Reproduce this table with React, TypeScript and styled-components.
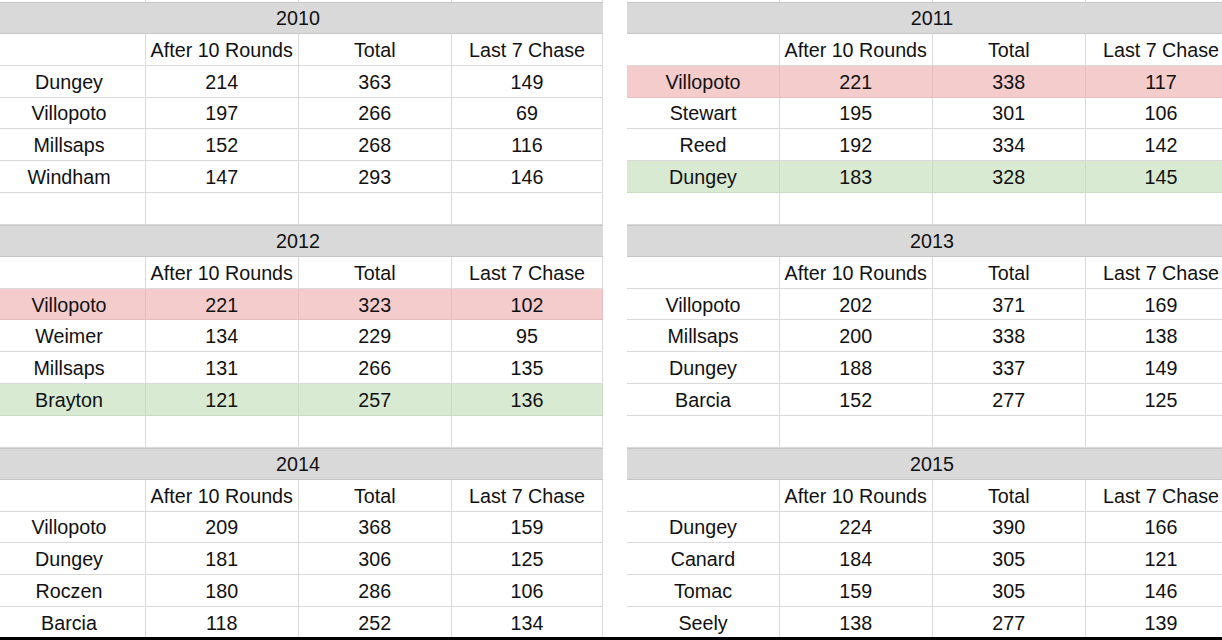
import React from "react";
import styled, { createGlobalStyle } from "styled-components";

const GlobalStyle = createGlobalStyle`
  html, body {
    margin: 0;
    padding: 0;
    background: #ffffff;
  }
  body {
    font-family: "Liberation Sans", Arial, sans-serif;
  }
`;

type Tone = "plain" | "loss" | "win";

const fills: Record<Tone, string> = {
  plain: "#ffffff",
  loss: "#f4cccc",
  win: "#d9ead3",
};

const lines: Record<Tone, string> = {
  plain: "#dadada",
  loss: "#e6bcbc",
  win: "#c9dcc2",
};

const Page = styled.div`
  width: 1222px;
  height: 640px;
  box-sizing: border-box;
  border-bottom: 3px solid #000;
  overflow: hidden;
`;

const Sheet = styled.div`
  display: grid;
  grid-template-columns: 610px 610px;
  column-gap: 24px;
  margin-left: -7px;
`;

const Table = styled.div`
  display: grid;
  grid-template-columns: 153px 152.5px 153.5px 151px;
  grid-auto-rows: auto;
`;

const StubCell = styled.div`
  height: 2px;
  border-right: 1px solid #dadada;
  box-sizing: border-box;
`;

const YearBar = styled.div`
  grid-column: 1 / -1;
  height: 31.85px;
  box-sizing: border-box;
  background: #d9d9d9;
  border-top: 1px solid #c6c6c6;
  border-bottom: 1px solid #c6c6c6;
  display: flex;
  align-items: center;
  justify-content: center;
  font-size: 19.7px;
  color: #111;
  padding-top: 1px;
`;

const Cell = styled.div<{ $tone: Tone }>`
  height: 31.85px;
  box-sizing: border-box;
  background: ${(p) => fills[p.$tone]};
  border-bottom: 1px solid ${(p) => lines[p.$tone]};
  border-right: 1px solid ${(p) => lines[p.$tone]};
  display: flex;
  align-items: center;
  justify-content: center;
  font-size: 19.7px;
  color: #111;
  white-space: nowrap;
  padding-top: 2px;
`;

type Row = { name: string; after: number; total: number; last: number; tone?: Tone };
type Block = { year: string; rows: Row[] };

const blocks: Block[] = [
  {
    year: "2010",
    rows: [
      { name: "Dungey", after: 214, total: 363, last: 149 },
      { name: "Villopoto", after: 197, total: 266, last: 69 },
      { name: "Millsaps", after: 152, total: 268, last: 116 },
      { name: "Windham", after: 147, total: 293, last: 146 },
    ],
  },
  {
    year: "2011",
    rows: [
      { name: "Villopoto", after: 221, total: 338, last: 117, tone: "loss" },
      { name: "Stewart", after: 195, total: 301, last: 106 },
      { name: "Reed", after: 192, total: 334, last: 142 },
      { name: "Dungey", after: 183, total: 328, last: 145, tone: "win" },
    ],
  },
  {
    year: "2012",
    rows: [
      { name: "Villopoto", after: 221, total: 323, last: 102, tone: "loss" },
      { name: "Weimer", after: 134, total: 229, last: 95 },
      { name: "Millsaps", after: 131, total: 266, last: 135 },
      { name: "Brayton", after: 121, total: 257, last: 136, tone: "win" },
    ],
  },
  {
    year: "2013",
    rows: [
      { name: "Villopoto", after: 202, total: 371, last: 169 },
      { name: "Millsaps", after: 200, total: 338, last: 138 },
      { name: "Dungey", after: 188, total: 337, last: 149 },
      { name: "Barcia", after: 152, total: 277, last: 125 },
    ],
  },
  {
    year: "2014",
    rows: [
      { name: "Villopoto", after: 209, total: 368, last: 159 },
      { name: "Dungey", after: 181, total: 306, last: 125 },
      { name: "Roczen", after: 180, total: 286, last: 106 },
      { name: "Barcia", after: 118, total: 252, last: 134 },
    ],
  },
  {
    year: "2015",
    rows: [
      { name: "Dungey", after: 224, total: 390, last: 166 },
      { name: "Canard", after: 184, total: 305, last: 121 },
      { name: "Tomac", after: 159, total: 305, last: 146 },
      { name: "Seely", after: 138, total: 277, last: 139 },
    ],
  },
];

function YearTable({ block, stub, trailing }: { block: Block; stub: boolean; trailing: boolean }) {
  return (
    <Table>
      {stub && [0, 1, 2, 3].map((i) => <StubCell key={`s${i}`} />)}
      <YearBar>{block.year}</YearBar>
      <Cell $tone="plain" />
      <Cell $tone="plain">After 10 Rounds</Cell>
      <Cell $tone="plain">Total</Cell>
      <Cell $tone="plain">Last 7 Chase</Cell>
      {block.rows.map((r) => {
        const t = r.tone ?? "plain";
        return (
          <React.Fragment key={r.name}>
            <Cell $tone={t}>{r.name}</Cell>
            <Cell $tone={t}>{r.after}</Cell>
            <Cell $tone={t}>{r.total}</Cell>
            <Cell $tone={t}>{r.last}</Cell>
          </React.Fragment>
        );
      })}
      {trailing && [0, 1, 2, 3].map((i) => <Cell key={`e${i}`} $tone="plain" />)}
    </Table>
  );
}

export default function App() {
  return (
    <Page>
      <GlobalStyle />
      <Sheet>
        {blocks.map((b, i) => (
          <YearTable key={b.year} block={b} stub={i < 2} trailing={i < 4} />
        ))}
      </Sheet>
    </Page>
  );
}
